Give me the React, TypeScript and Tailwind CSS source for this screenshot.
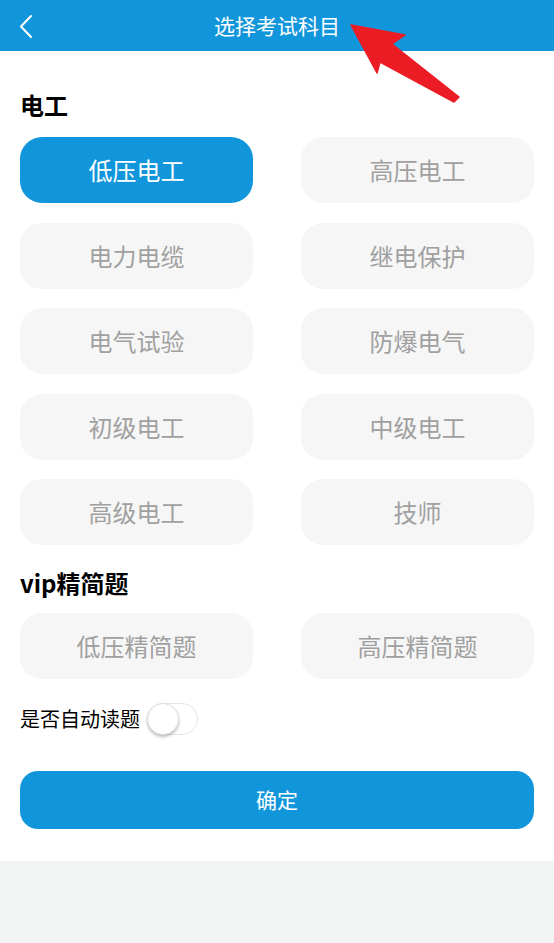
import { useState } from "react";

const subjects = ["低压电工", "高压电工", "电力电缆", "继电保护", "电气试验", "防爆电气", "初级电工", "中级电工", "高级电工", "技师"];
const vipSubjects = ["低压精简题", "高压精简题"];

const font = { fontFamily: '"Noto Sans CJK SC", "Noto Sans", sans-serif' };

export default function App() {
  const [selected, setSelected] = useState("低压电工");
  const [autoRead, setAutoRead] = useState(false);

  return (
    <div className="relative min-h-[943px] w-[554px] bg-[#f2f3f3]" style={font}>
      <header className="relative flex h-[51px] items-center justify-center bg-[#1296db]">
        <button className="absolute left-[18px] top-[13px] p-0">
          <svg width="16" height="26" viewBox="0 0 16 26" fill="none">
            <path d="M13 3L3 13.5L13 24" stroke="white" strokeWidth="2" strokeLinecap="round" strokeLinejoin="round" />
          </svg>
        </button>
        <h1 className="text-[21px] leading-none text-white">选择考试科目</h1>
      </header>

      <main className="bg-white px-5 pb-8 pt-[42px]">
        <h2 className="text-[24px] font-bold leading-none text-black">电工</h2>
        <div className="mt-[20px] grid grid-cols-2 gap-x-12 gap-y-[19.5px]">
          {subjects.map((s) => (
            <SubjectButton key={s} label={s} active={selected === s} onClick={() => setSelected(s)} />
          ))}
        </div>

        <h2 className="mt-[26px] text-[24px] font-bold leading-none text-black">vip精简题</h2>
        <div className="mt-[18px] grid grid-cols-2 gap-x-12">
          {vipSubjects.map((s) => (
            <SubjectButton key={s} label={s} active={selected === s} onClick={() => setSelected(s)} />
          ))}
        </div>

        <div className="mt-[24px] flex items-center gap-[7px]">
          <span className="text-[20px] leading-none text-black">是否自动读题</span>
          <button
            onClick={() => setAutoRead(!autoRead)}
            className={`relative h-[32px] w-[51px] rounded-full border ${autoRead ? "border-[#1296db] bg-[#1296db]" : "border-[#e5e5e5] bg-white"}`}
          >
            <span
              className={`absolute top-[-1px] h-[32px] w-[32px] rounded-full border border-[#e0e0e0] bg-white shadow-[0_2px_3px_rgba(0,0,0,0.25)] ${autoRead ? "left-[18px]" : "left-[-1px]"}`}
            />
          </button>
        </div>

        <button className="mt-[36px] flex h-[58px] w-full items-center justify-center rounded-[18px] bg-[#1296db] text-[21px] text-white">
          确定
        </button>
      </main>

      <svg className="pointer-events-none absolute left-0 top-0" width="554" height="120" viewBox="0 0 554 120">
        <polygon points="351,25 405,35 392,44 459,97 454,102 380,62 377,73" fill="#ec1c24" strokeLinejoin="round" stroke="#ec1c24" strokeWidth="1.5" />
      </svg>
    </div>
  );
}

function SubjectButton({ label, active, onClick }: { label: string; active: boolean; onClick: () => void }) {
  return (
    <button
      onClick={onClick}
      className={`flex h-[66px] items-center justify-center rounded-[22px] text-[24px] ${active ? "bg-[#1296db] text-white" : "bg-[#f6f6f6] text-[#a0a0a0]"}`}
    >
      {label}
    </button>
  );
}
